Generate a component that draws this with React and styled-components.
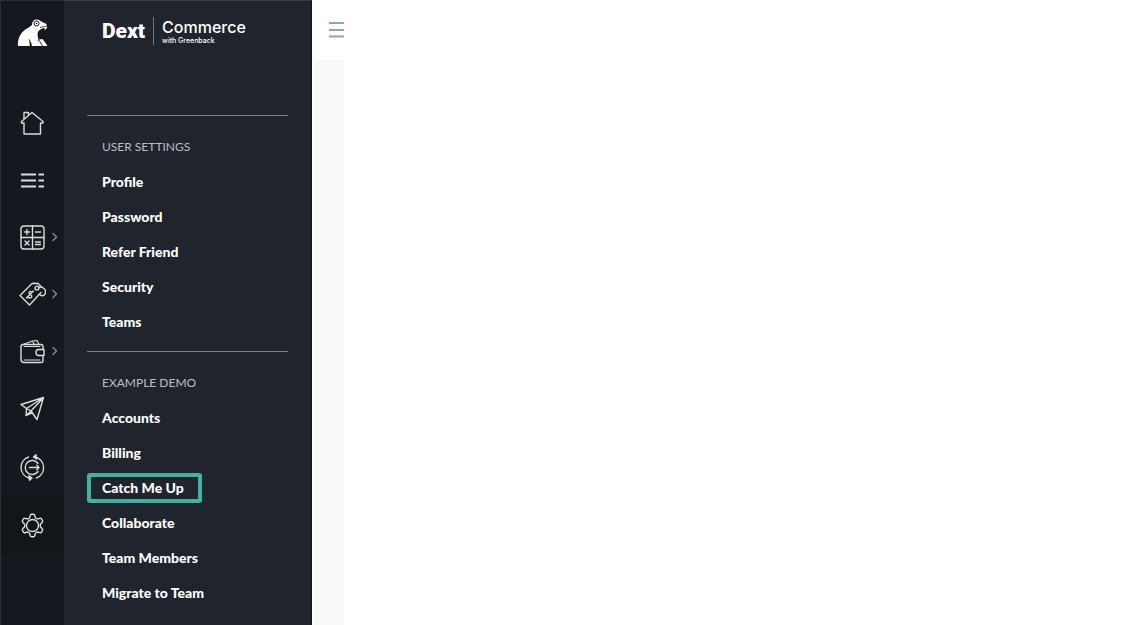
import React from 'react'
import styled, { createGlobalStyle } from 'styled-components'

const GlobalStyle = createGlobalStyle`
  * {
    box-sizing: border-box;
  }
  body {
    margin: 0;
    background: #ffffff;
    font-family: Lato, 'Liberation Sans', sans-serif;
  }
`

const Page = styled.div`
  display: flex;
  min-height: 100vh;
`

const Rail = styled.nav`
  flex: none;
  width: 64px;
  background: #15191f;
  border-left: 1px solid #2a2f36;
  border-top: 1px solid #2a2f36;
  display: flex;
  flex-direction: column;
`

const Home = styled.a`
  height: 93px;
  padding: 16px 0 0 15px;
`

const RailGroup = styled.div`
  display: flex;
  flex-direction: column;
  margin-bottom: 2px;
`

const RailButton = styled.button`
  display: grid;
  grid-template-columns: 17px 28px 1fr;
  align-items: center;
  justify-items: center;
  width: 100%;
  height: ${({ $tall }) => ($tall ? 58 : 57)}px;
  padding: 0;
  border: none;
  color: #d9dbdd;
  background: ${({ $active }) => ($active ? '#12161b' : 'none')};
  cursor: pointer;

  svg:first-child {
    grid-column: 2;
  }
`

const Icon = styled.svg`
  display: block;
  fill: none;
  stroke: currentColor;
  stroke-width: 1.4;
  stroke-linejoin: round;
  stroke-linecap: round;
`

const Chevron = styled(Icon)`
  color: #888d93;
`

const Sidebar = styled.aside`
  flex: none;
  width: 248px;
  padding: 0 23px 18px;
  background: #20242d;
  border-top: 1px solid #383d45;
  border-right: 1px solid #0f131b;
`

const Brand = styled.header`
  display: flex;
  align-items: flex-start;
  height: 114px;
  padding: 16px 0 0 15px;
  color: #ffffff;
`

const Dext = styled.span`
  font-family: Roboto, 'Liberation Sans', sans-serif;
  font-weight: 900;
  font-size: 21px;
  line-height: 28px;
`

const Product = styled.div`
  display: flex;
  flex-direction: column;
  margin-left: 8px;
  padding-left: 8px;
  height: 28px;
  border-left: 1px solid #70767d;
  font-family: Inter, sans-serif;
`

const ProductName = styled.span`
  font-size: 16px;
  font-weight: 500;
  line-height: 20px;
`

const ProductNote = styled.span`
  font-size: 7px;
  font-weight: 500;
  line-height: 8px;
`

const Section = styled.section`
  border-top: 1px solid #77818a;
  padding: 22px 0 14px;
`

const SectionTitle = styled.h2`
  margin: 0 0 11px 15px;
  font-size: 12px;
  font-weight: 400;
  line-height: 18px;
  color: #b9bfc6;
  text-transform: uppercase;
`

const Links = styled.ul`
  list-style: none;
  margin: 0;
  padding: 0;
  display: flex;
  flex-direction: column;
  align-items: flex-start;
  gap: 5px;
`

const MenuLink = styled.a`
  display: block;
  height: 30px;
  padding: 0 14px 0 11px;
  border: 4px solid ${({ $marked }) => ($marked ? '#43b2a6' : 'transparent')};
  border-radius: 3px;
  font-size: 14px;
  font-weight: 900;
  line-height: 22px;
  color: #ffffff;
  text-decoration: none;
`

const Content = styled.main`
  flex: none;
  width: 32px;
  display: flex;
  flex-direction: column;
  background: #f8f9fb;
  border-left: 2px solid #ffffff;
`

const TopBar = styled.div`
  height: 62px;
  padding: 20px 0 0 15px;
  background: #ffffff;
  border-bottom: 1px solid #f1f2f4;
  overflow: hidden;
`

const MenuButton = styled.button`
  display: block;
  padding: 0;
  border: none;
  background: none;
  color: #93a5ad;
  cursor: pointer;
`

const HouseIcon = () => (
  <Icon width="28" height="28" viewBox="0 0 28 28">
    <path d="M14 3.5 3.5 12.5v1.5H6v11h16.5V14H25v-1.5zM6 10V3.5h4.5V6" />
  </Icon>
)

const ListIcon = () => (
  <Icon width="28" height="28" viewBox="0 0 28 28">
    <path
      d="M3 8.500h15M3 14.500h15M3 20.500h15M20.500 8.500h5.500M20.500 14.500h5.500M20.500 20.500h5.500"
      strokeWidth="1.800"
      strokeLinecap="butt"
    />
  </Icon>
)

const CalculatorIcon = () => (
  <Icon width="28" height="28" viewBox="0 0 28 28">
    <rect x="3" y="3" width="23" height="23" rx="3" />
    <path d="M14.500 3v23M3 14.500h23" />
    <path d="M9 6.500v5M6.500 9h5M17.500 9h5M7 18l4 4M11 18l-4 4M17.500 19h5M17.500 21.500h5" />
  </Icon>
)

const TagIcon = () => (
  <Icon width="28" height="28" viewBox="0 0 28 28">
    <path d="M2 15.500 13.500 4Q14.300 3.200 15.500 3.200L20 3.500 24 7.500M23 12.500 11.500 25 2 15.500" />
    <circle cx="19" cy="8" r="1.900" />
    <path d="M20.500 7.500c4-1.500 7.500 2 7 5s-3.500 4.500-6 2" />
    <path d="M13.800 11.800c-1.500-1-3.300 .2-2.600 1.700s2.800 1.200 2.600 3-2.400 1.800-3.800 .6M15.300 11l-6.800 7" />
  </Icon>
)

const WalletIcon = () => (
  <Icon width="28" height="28" viewBox="0 0 28 28">
    <path d="M25 12.500V9.500Q25 7.500 23 7.500H5Q3 7.500 3 9.500V22.500Q3 25.500 6 25.500H23Q25 25.500 25 23.500V18.500" />
    <path d="M26 12.500h-5.500q-2.500 0-2.500 3t2.500 3H26z" />
    <path d="M5 7.500 14.500 4l1.500 3M14 4.200l5-.7 2 4M6 9.500h16M6 23h16" strokeWidth="1.100" />
  </Icon>
)

const PlaneIcon = () => (
  <Icon width="28" height="28" viewBox="0 0 28 28">
    <path d="M25.500 3.500 3 10.500l5.500 4zM25.500 3.500 19 25.500l-6-8.500zM8.500 14.500l-.5 7 5-4.500M8 21.500l6.500-3" />
    <path d="M8.500 14.500 13 17" />
  </Icon>
)

const SyncIcon = () => (
  <Icon width="28" height="28" viewBox="0 0 28 28">
    <path d="M10.500 4A11 11 0 0 0 11 25M18.500 25A11 11 0 0 0 17 4" />
    <path d="M20 10.500A7 7 0 1 0 20 18.500M11.500 14.500H21M18.800 12.300 21 14.500l-2.200 2.200" />
    <path d="M18 1.800 15.500 4 18.500 6zM11 22.800l3 2.200-2.500 2.200z" fill="currentColor" />
  </Icon>
)

const GearIcon = () => (
  <Icon width="28" height="28" viewBox="0 0 28 28">
    <path d="M12.200 4.500Q12.500 3.300 13.500 3.300h2Q16.500 3.300 16.800 4.500L17.500 7l1.800 1 2.500-.7q1.200-.3 1.700 .6l1 1.700q.5 .9-.4 1.800L22.300 13.300v2.400l1.800 1.900q.9 .9 .4 1.800l-1 1.700q-.5 .9-1.700 .6L19.300 21l-1.800 1-.7 2.500q-.3 1.200-1.300 1.200h-2q-1 0-1.300-1.200L11.500 22l-1.800-1-2.500 .7q-1.200 .3-1.700-.6l-1-1.700q-.5-.9 .4-1.800l1.800-1.900v-2.400L4.900 11.400q-.9-.9-.4-1.800l1-1.700q.5-.9 1.700-.6L9.700 8l1.800-1z" />
    <circle cx="14.500" cy="14.500" r="6" />
  </Icon>
)

const FrogLogo = () => (
  <svg width="34" height="32" viewBox="0 0 34 32" aria-hidden="true">
    <path
      fill="#ffffff"
      d="M2 29C1.500 24 3 18.500 7 14.500c3-3 7-4.500 9-6.500C16 4.500 18 2.500 21 2.500c2 0 3 1.500 5 2.300L30.500 7 31 11l-2 2-1-2.200c-2.500 1.200-4 1.700-5.500 3.200-1.500 2-1 5 0 8l-1.500 2.500 1 4.500h-6c-.5-3-1.500-5.500-3.500-7.500 1 2.500 1.300 5 1.300 7.500z"
    />
    <path fill="#ffffff" d="M23 22.500l3.500-.5L31 28v1h-4zM20.500 25l1 4h4.500l-3.500-6z" />
    <circle cx="20.500" cy="6.500" r="2.500" fill="#ffffff" stroke="#15191f" strokeWidth="1" />
    <circle cx="20.500" cy="6.500" r=".8" fill="#15191f" />
    <path d="M30.500 9.200c-2 .8-4.500 .3-6.500 1.300" fill="none" stroke="#15191f" strokeWidth=".8" />
  </svg>
)

const mainItems = [
  { label: 'Home', icon: HouseIcon },
  { label: 'Transactions', icon: ListIcon },
  { label: 'Accounting', icon: CalculatorIcon, more: true },
  { label: 'Sales', icon: TagIcon, more: true },
  { label: 'Expenses', icon: WalletIcon, more: true },
  { label: 'Send', icon: PlaneIcon },
]

const accountItems = [
  { label: 'Exports', icon: SyncIcon, tall: true },
  { label: 'Settings', icon: GearIcon, tall: true, active: true },
]

const sections = [
  {
    title: 'User Settings',
    links: ['Profile', 'Password', 'Refer Friend', 'Security', 'Teams'],
  },
  {
    title: 'Example Demo',
    links: ['Accounts', 'Billing', 'Catch Me Up', 'Collaborate', 'Team Members', 'Migrate to Team'],
  },
]

const marked = 'Catch Me Up'

const RailItems = ({ items }) => (
  <RailGroup>
    {items.map(({ label, icon: Glyph, more, tall, active }) => (
      <RailButton key={label} type="button" aria-label={label} $tall={tall} $active={active}>
        <Glyph />
        {more && (
          <Chevron width="8" height="10" viewBox="0 0 8 10">
            <path d="M2 1.500 5.500 5 2 8.500" />
          </Chevron>
        )}
      </RailButton>
    ))}
  </RailGroup>
)

export default function App() {
  return (
    <Page>
      <GlobalStyle />
      <Rail>
        <Home href="#" aria-label="Dashboard">
          <FrogLogo />
        </Home>
        <RailItems items={mainItems} />
        <RailItems items={accountItems} />
      </Rail>

      <Sidebar>
        <Brand>
          <Dext>Dext</Dext>
          <Product>
            <ProductName>Commerce</ProductName>
            <ProductNote>with Greenback</ProductNote>
          </Product>
        </Brand>
        {sections.map((section) => (
          <Section key={section.title}>
            <SectionTitle>{section.title}</SectionTitle>
            <Links>
              {section.links.map((link) => (
                <li key={link}>
                  <MenuLink href="#" $marked={link === marked}>
                    {link}
                  </MenuLink>
                </li>
              ))}
            </Links>
          </Section>
        ))}
      </Sidebar>

      <Content>
        <TopBar>
          <MenuButton type="button" aria-label="Toggle menu">
            <Icon width="15" height="20" viewBox="0 0 15 20">
              <path d="M0 3h15M0 10h15M0 16.500h15" strokeWidth="2" strokeLinecap="butt" />
            </Icon>
          </MenuButton>
        </TopBar>
      </Content>
    </Page>
  )
}
